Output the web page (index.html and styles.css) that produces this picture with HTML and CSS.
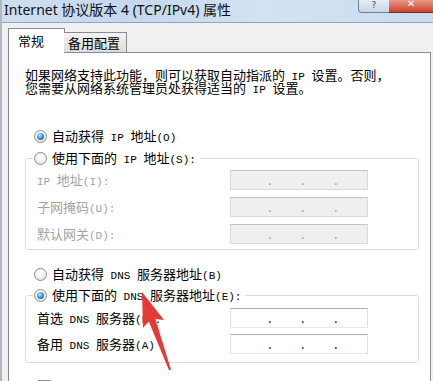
FILE: index.html
```html
<!DOCTYPE html>
<html lang="zh-CN">
<head>
    <meta charset="UTF-8">
    <meta name="viewport" content="width=device-width, initial-scale=1.0">
    <title>Internet 协议版本 4 (TCP/IPv4) 属性</title>
    <link rel="stylesheet" href="styles.css">
</head>
<body>

    <div class="window">
        <div class="titlebar">
            <span class="title">Internet 协议版本 4 (TCP/IPv4) 属性</span>
            <div class="caption-btns">
                <span class="help-btn">?</span>
                <span class="close-btn">✕</span>
            </div>
        </div>

        <div class="dialog">
            <div class="tabs">
                <div class="tab active">常规</div>
                <div class="tab">备用配置</div>
            </div>

            <div class="panel">
                <p class="intro">如果网络支持此功能，则可以获取自动指派的<span class="en"> IP </span>设置。否则，<br>您需要从网络系统管理员处获得适当的<span class="en"> IP </span>设置。</p>

                <div class="option first"><span class="radio on"></span><span>自动获得<span class="en"> IP </span>地址<span class="en">(O)</span></span></div>
                <fieldset class="group disabled">
                    <legend class="option"><span class="radio"></span><span>使用下面的<span class="en"> IP </span>地址<span class="en">(S):</span></span></legend>
                    <div class="fields">
                        <label><span class="en">IP </span>地址<span class="en">(I):</span></label>
                        <div class="ip"><span>.</span><span>.</span><span>.</span></div>
                        <label>子网掩码<span class="en">(U):</span></label>
                        <div class="ip"><span>.</span><span>.</span><span>.</span></div>
                        <label>默认网关<span class="en">(D):</span></label>
                        <div class="ip"><span>.</span><span>.</span><span>.</span></div>
                    </div>
                </fieldset>

                <div class="option second"><span class="radio"></span><span>自动获得<span class="en"> DNS </span>服务器地址<span class="en">(B)</span></span></div>
                <fieldset class="group dns">
                    <legend class="option"><span class="radio on"></span><span>使用下面的<span class="en"> DNS </span>服务器地址<span class="en">(E):</span></span></legend>
                    <div class="fields">
                        <label>首选<span class="en"> DNS </span>服务器<span class="en">(P):</span></label>
                        <div class="ip"><span>.</span><span>.</span><span>.</span></div>
                        <label>备用<span class="en"> DNS </span>服务器<span class="en">(A)</span></label>
                        <div class="ip"><span>.</span><span>.</span><span>.</span></div>
                    </div>
                </fieldset>

                <div class="check-row"><span class="checkbox"></span><span>退出时验证设置<span class="en">(L)</span></span></div>
            </div>
        </div>
    </div>

    <!-- red annotation arrow pointing at the DNS option -->
    <svg class="arrow" width="433" height="381" viewBox="0 0 433 381">
        <polygon points="142,292 164,320 155.4,319 171,369.7 169,370.3 148.8,321.4 143,327.7" fill="#e53935"/>
    </svg>

</body>
</html>
```

FILE: styles.css
```css
* {
    box-sizing: border-box;
}
body {
    margin: 0;
    width: 433px;
    height: 381px;
    overflow: hidden;
    font-family: "Noto Sans CJK SC", sans-serif;
    font-size: 13px;
    color: #000;
    background-color: #f0f0f0;
    position: relative;
}
.en {
    font-family: "Liberation Mono", monospace;
    font-size: 11px;
    line-height: 0;
    white-space: pre;
}
.titlebar {
    height: 23px;
    display: flex;
    justify-content: space-between;
    background: linear-gradient(90deg, #cfdff1 0%, #c4d8ee 30%, #d2e2f3 60%, #c9dcf0 100%);
    border-bottom: 1px solid #8ea3bc;
}
.title {
    padding-left: 2px;
    line-height: 20px;
    font-family: "Noto Sans", "Noto Sans CJK SC", sans-serif;
    font-size: 14px;
    color: #111;
}
.caption-btns {
    display: flex;
    align-items: flex-start;
    flex-shrink: 0;
}
.help-btn {
    width: 31px;
    height: 13px;
    border: 1px solid #6f7f94;
    border-top: none;
    border-right: none;
    border-radius: 0 0 0 4px;
    background: linear-gradient(#e6edf6, #c9d6e6);
    font-family: "DejaVu Sans", sans-serif;
    font-size: 9px;
    line-height: 10px;
    text-align: center;
    color: #3a4a5c;
}
.close-btn {
    width: 44px;
    height: 13px;
    border-bottom: 1px solid #7a2a1e;
    background: linear-gradient(#e8998a, #c8432b);
    font-family: "DejaVu Sans", sans-serif;
    font-size: 10px;
    line-height: 8px;
    text-align: center;
    color: #fff;
}
.window {
    border-left: 2px solid #b4b8bd;
}
.dialog {
    padding: 5px 2px 0 6px;
}
.tabs {
    display: flex;
    align-items: flex-end;
    margin-bottom: -1px;
    position: relative;
    z-index: 1;
}
.tab {
    border: 1px solid #898c95;
    border-bottom: none;
}
.tab.active {
    width: 57px;
    height: 25px;
    padding-left: 9px;
    line-height: 24px;
    background-color: #fff;
}
.tab:not(.active) {
    width: 63px;
    height: 20px;
    margin-left: -1px;
    margin-bottom: 1px;
    padding-left: 4px;
    line-height: 19px;
    border-left: none;
    background: linear-gradient(#f3f3f3, #dcdcdc);
}
.panel {
    height: 340px;
    padding: 15px 11px 0 16px;
    background-color: #fff;
    border: 1px solid #898c95;
}
.intro {
    margin: 0;
    line-height: 13px;
    white-space: nowrap;
}
.option {
    display: flex;
    align-items: center;
    height: 20px;
    line-height: 20px;
    white-space: nowrap;
}
.option.first {
    margin-top: 32px;
    padding-left: 9px;
}
.option.second {
    margin-top: 14px;
    padding-left: 9px;
}
.radio {
    width: 13px;
    height: 13px;
    margin-right: 5px;
    border: 1px solid #8d8f90;
    border-radius: 50%;
    background: radial-gradient(circle at 50% 40%, #ffffff 20%, #d8d8d8 100%);
    display: flex;
    align-items: center;
    justify-content: center;
    flex-shrink: 0;
}
.radio.on::after {
    content: "";
    width: 7px;
    height: 7px;
    border-radius: 50%;
    background: radial-gradient(circle at 40% 35%, #bfe6ff 0%, #2b8ad8 55%, #0b4a8c 100%);
}
.group {
    margin: 2px 0 0 0;
    padding: 2px 10px 5px 7px;
    border: 1px solid #d5dfe5;
    border-radius: 3px;
}
.group.dns {
    margin-top: 1px;
    padding-top: 3px;
    padding-bottom: 8px;
}
.group legend {
    padding: 0 4px 0 1px;
}
.fields {
    margin-left: 4px;
    display: grid;
    grid-template-columns: 193px 138px;
    row-gap: 7px;
}
.dns .fields {
    row-gap: 6px;
}
.fields label {
    height: 20px;
    line-height: 20px;
    white-space: nowrap;
}
.disabled .fields label {
    color: #a3a3a3;
}
.ip {
    height: 20px;
    display: flex;
    padding-left: 37px;
    background-color: #fff;
    border: 1px solid #dbdfe6;
    border-top-color: #abadb3;
    border-bottom-color: #e3e9ef;
    line-height: 17px;
}
.ip span {
    width: 34px;
}
.disabled .ip {
    background-color: #efefef;
    border-color: #d9d9d9;
    border-top-color: #c2c2c2;
    color: #9a9a9a;
}
.check-row {
    display: flex;
    align-items: flex-start;
    margin-top: 17px;
    padding-left: 13px;
    height: 13px;
    line-height: 13px;
    color: #555;
}
.checkbox {
    width: 13px;
    height: 13px;
    margin-right: 6px;
    border: 1px solid #8f8f8f;
    background: linear-gradient(135deg, #dcdcdc, #ffffff);
}
.arrow {
    position: absolute;
    left: 0;
    top: 0;
    pointer-events: none;
}
```
